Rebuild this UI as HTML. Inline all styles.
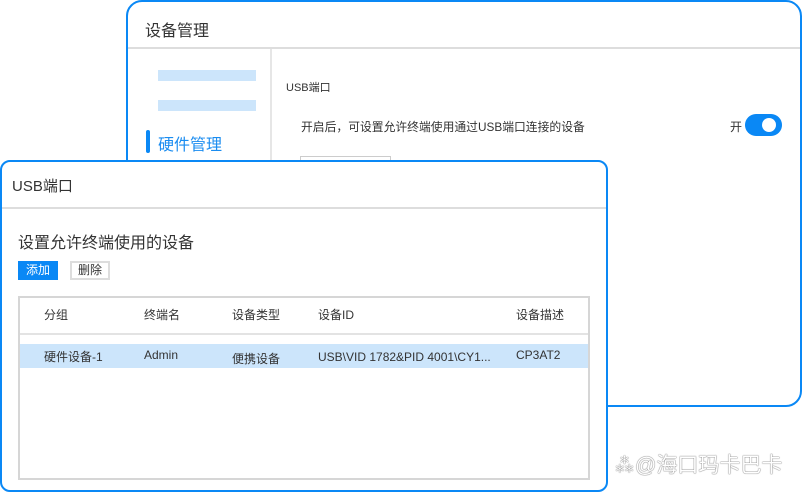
<!DOCTYPE html>
<html><head><meta charset="utf-8"><style>
*{margin:0;padding:0;box-sizing:border-box}
body{width:802px;height:492px;background:#fff;position:relative;overflow:hidden;font-family:"Liberation Sans","Noto Sans CJK SC",sans-serif;color:#333}
.a{position:absolute;white-space:nowrap}
.t{font-size:12px}
</style></head><body>
<div class="a" style="left:126px;top:0;width:676px;height:407px;border:2px solid #0a88f5;border-radius:16px;background:#fff"></div>
<div class="a" style="left:128px;top:47px;width:672px;height:2px;background:#ddd"></div>
<div class="a" style="left:145px;top:17px;font-size:16px;color:#333">设备管理</div>
<div class="a" style="left:270px;top:49px;width:2px;height:120px;background:#e6e6e6"></div>
<div class="a" style="left:158px;top:70px;width:98px;height:11px;background:#cce5fb"></div>
<div class="a" style="left:158px;top:100px;width:98px;height:11px;background:#cce5fb"></div>
<div class="a" style="left:146px;top:130px;width:4px;height:23px;background:#0a88f5;border-radius:2px"></div>
<div class="a" style="left:158px;top:131px;font-size:16px;color:#1a8cf0">硬件管理</div>
<div class="a" style="left:286px;top:79px;font-size:11px">USB端口</div>
<div class="a" style="left:301px;top:118px;font-size:11.8px">开启后，可设置允许终端使用通过USB端口连接的设备</div>
<div class="a t" style="left:730px;top:118px">开</div>
<div class="a" style="left:745px;top:114px;width:37px;height:22px;border-radius:11px;background:#0a88f5"></div>
<div class="a" style="left:762px;top:118px;width:14px;height:14px;border-radius:7px;background:#fff"></div>
<div class="a" style="left:300px;top:156px;width:91px;height:8px;border:1px solid #ccc;border-bottom:none"></div>

<div class="a" style="left:0;top:160px;width:608px;height:332px;border:2px solid #0a88f5;border-radius:10px;background:#fff"></div>
<div class="a" style="left:2px;top:207px;width:604px;height:2px;background:#ddd"></div>
<div class="a" style="left:12px;top:175px;font-size:15px">USB端口</div>
<div class="a" style="left:18px;top:229px;font-size:16px">设置允许终端使用的设备</div>
<div class="a t" style="left:18px;top:261px;width:40px;height:19px;background:#0a88f5;color:#fff;text-align:center;line-height:19px">添加</div>
<div class="a t" style="left:70px;top:261px;width:40px;height:19px;border:2px solid #ddd;text-align:center;line-height:15px">删除</div>
<div class="a" style="left:18px;top:296px;width:572px;height:184px;border:2px solid #d6d6d6"></div>
<div class="a" style="left:20px;top:333px;width:568px;height:2px;background:#e3e3e3"></div>
<div class="a" style="left:20px;top:344px;width:568px;height:24px;background:#cce5fb"></div>
<div class="a t" style="left:44px;top:306px">分组</div>
<div class="a t" style="left:144px;top:306px">终端名</div>
<div class="a t" style="left:232px;top:306px">设备类型</div>
<div class="a t" style="left:318px;top:306px">设备ID</div>
<div class="a t" style="left:516px;top:306px">设备描述</div>
<div class="a t" style="left:44px;top:348px">硬件设备-1</div>
<div class="a t" style="left:144px;top:348px">Admin</div>
<div class="a t" style="left:232px;top:350px">便携设备</div>
<div class="a t" style="left:318px;top:350px">USB\VID 1782&amp;PID 4001\CY1...</div>
<div class="a t" style="left:516px;top:348px">CP3AT2</div>
<div class="a" style="left:614px;top:449px;font-size:21px;color:#fff;text-shadow:0 0 1px #666,0 0 1px #666">⁂@海口玛卡巴卡</div>
</body></html>
